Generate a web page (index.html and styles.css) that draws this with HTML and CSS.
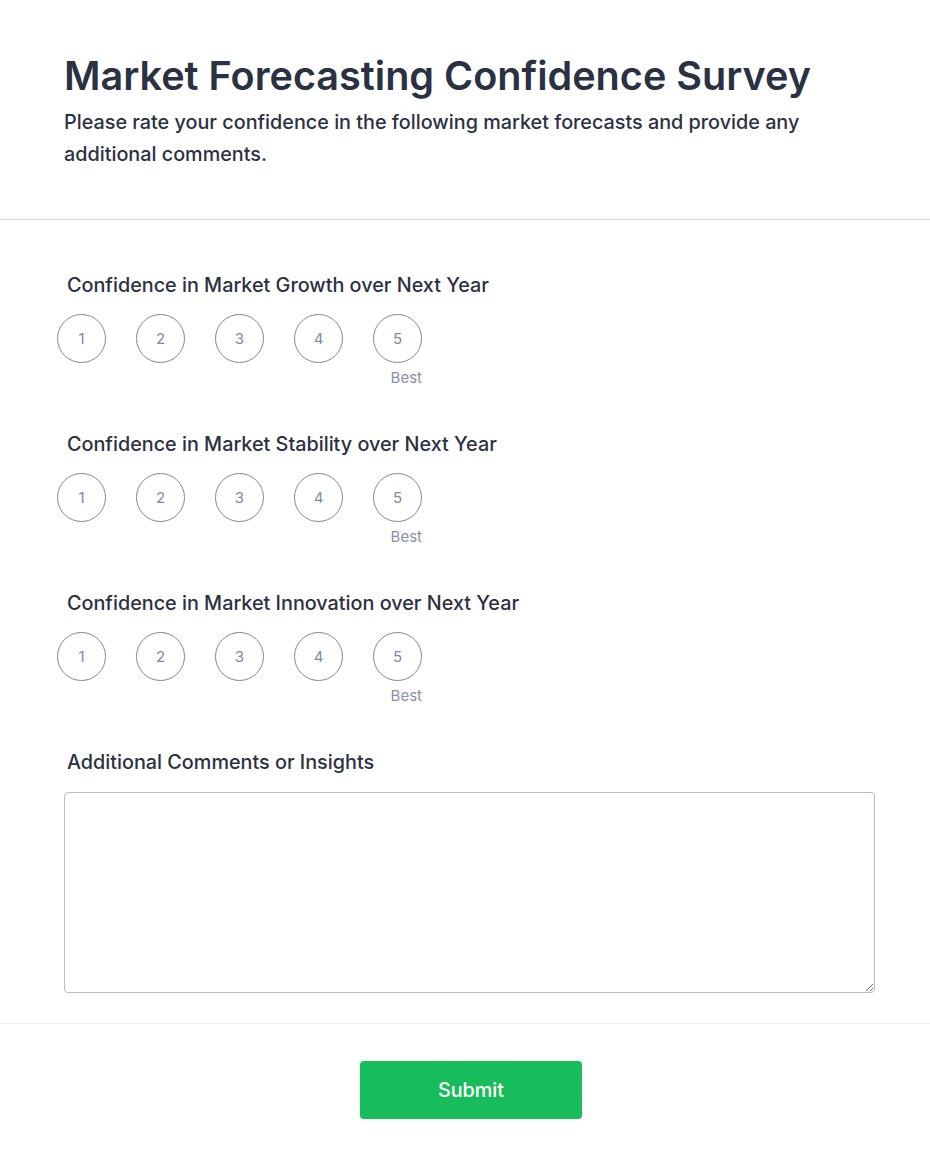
FILE: index.html
```html
<!DOCTYPE html>
<html lang="en">
<head>
<meta charset="utf-8">
<title>Market Forecasting Confidence Survey</title>
<link rel="stylesheet" href="styles.css">
</head>
<body>
<header class="header">
  <h1 class="title">Market Forecasting Confidence Survey</h1>
  <p class="subtitle">Please rate your confidence in the following market forecasts and provide any additional comments.</p>
</header>
<main class="form">
  <section class="question">
    <div class="label">Confidence in Market Growth over Next Year</div>
    <div class="rating">
      <div class="circles">
        <span class="circle">1</span><span class="circle">2</span><span class="circle">3</span><span class="circle">4</span><span class="circle">5</span>
      </div>
      <div class="best">Best</div>
    </div>
  </section>
  <section class="question">
    <div class="label">Confidence in Market Stability over Next Year</div>
    <div class="rating">
      <div class="circles">
        <span class="circle">1</span><span class="circle">2</span><span class="circle">3</span><span class="circle">4</span><span class="circle">5</span>
      </div>
      <div class="best">Best</div>
    </div>
  </section>
  <section class="question">
    <div class="label">Confidence in Market Innovation over Next Year</div>
    <div class="rating">
      <div class="circles">
        <span class="circle">1</span><span class="circle">2</span><span class="circle">3</span><span class="circle">4</span><span class="circle">5</span>
      </div>
      <div class="best">Best</div>
    </div>
  </section>
  <section class="question last">
    <div class="label">Additional Comments or Insights</div>
    <textarea class="comments"></textarea>
  </section>
</main>
<footer class="footer">
  <button class="submit" type="button">Submit</button>
</footer>
</body>
</html>
```
FILE: styles.css
```css
* { box-sizing: border-box; }
html, body { margin: 0; padding: 0; background: #ffffff; }
body {
  font-family: Inter, "Noto Sans", sans-serif;
  color: #2b3142;
}
.header {
  padding: 50px 64px 49px;
  border-bottom: 1px solid #d9dbe4;
}
.title {
  margin: 0;
  font-size: 39.6px;
  line-height: 52px;
  font-weight: 600;
  color: #2a3142;
}
.subtitle {
  margin: 4px 0 0;
  font-size: 19.8px;
  line-height: 32px;
  font-weight: 500;
  color: #2b3142;
}
.form {
  padding: 51px 55px 30px 64px;
  border-bottom: 1px solid #ebedf2;
}
.question { margin-bottom: 42px; }
.question.last { margin-bottom: 0; }
.label {
  font-size: 19.8px;
  line-height: 28px;
  font-weight: 500;
  color: #2b3142;
  padding-left: 3px;
}
.rating {
  display: inline-flex;
  flex-direction: column;
  margin-left: -7px;
  margin-top: 15px;
}
.circles {
  display: flex;
  gap: 30px;
}
.circle {
  width: 49px;
  height: 49px;
  border: 1px solid #7e879c;
  border-radius: 50%;
  display: flex;
  align-items: center;
  justify-content: center;
  font-size: 15px;
  color: #7c8aa3;
}
.best {
  align-self: flex-end;
  margin-top: 5px;
  font-size: 15px;
  line-height: 20px;
  color: #8593a8;
}
.comments {
  display: block;
  width: 100%;
  height: 201px;
  margin-top: 16px;
  border: 1px solid #b9bccb;
  border-radius: 4px;
  resize: vertical;
  font-family: inherit;
  font-size: 16px;
  padding: 8px;
}
.footer {
  display: flex;
  justify-content: center;
  padding: 37px 52px 50px 64px;
}
.submit {
  width: 222px;
  height: 58px;
  border: none;
  border-radius: 4px;
  background: #18bd5b;
  color: #ffffff;
  font-family: Inter, "Noto Sans", sans-serif;
  font-size: 19.8px;
  font-weight: 500;
}
```
